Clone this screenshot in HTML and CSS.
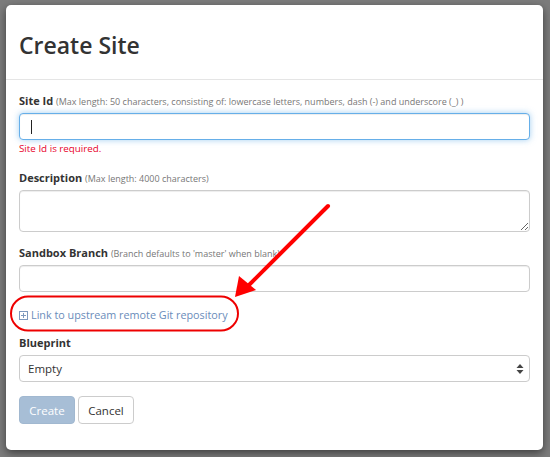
FILE: index.html
```html
<!DOCTYPE html>
<html>
<head>
<meta charset="utf-8">
<link rel="stylesheet" href="styles.css">
</head>
<body>
<div class="modal">
  <div class="modal-header">
    <h1 class="title">Create Site</h1>
  </div>
  <div class="modal-body">
    <div class="field">
      <label class="label">Site Id <span class="help">(Max length: 50 characters, consisting of: lowercase letters, numbers, dash (-) and underscore (_) )</span></label>
      <div class="input-wrap">
        <input class="control focused" type="text">
        <span class="caret"></span>
      </div>
      <div class="error">Site Id is required.</div>
    </div>
    <div class="field">
      <label class="label">Description <span class="help">(Max length: 4000 characters)</span></label>
      <textarea class="control area"></textarea>
    </div>
    <div class="field">
      <label class="label">Sandbox Branch <span class="help">(Branch defaults to 'master' when blank)</span></label>
      <input class="control" type="text">
    </div>
    <div class="link-row">
      <span class="plus"><svg width="9" height="9" viewBox="0 0 9 9"><rect x="0.5" y="0.5" width="8" height="8" fill="none" stroke="#7d98bd" stroke-width="1"/><path d="M2 4.5h5M4.5 2v5" stroke="#7d98bd" stroke-width="1"/></svg></span>
      <span class="link">Link to upstream remote Git repository</span>
    </div>
    <div class="field">
      <label class="label">Blueprint</label>
      <div class="select">
        <span>Empty</span>
        <svg class="updown" width="8" height="12" viewBox="0 0 8 12"><path d="M4 1L7.5 5H0.5z M4 11L7.5 7H0.5z" fill="#444"/></svg>
      </div>
    </div>
    <div class="buttons">
      <button class="btn btn-primary">Create</button>
      <button class="btn btn-default">Cancel</button>
    </div>
  </div>
</div>
<svg class="annot" width="550" height="457" viewBox="0 0 550 457">
  <rect x="11" y="296.5" width="227" height="34" rx="17" ry="17" fill="none" stroke="#ee0000" stroke-width="2"/>
  <path d="M328 206 L246 288" stroke="#ff0000" stroke-width="4" stroke-linecap="round"/>
  <path d="M235 297 L239 276 L256 290 Z" fill="#ff0000"/>
</svg>
</body>
</html>
```

FILE: styles.css
```css
* { box-sizing: border-box; }
html, body { margin: 0; padding: 0; }
body {
  width: 550px;
  height: 457px;
  background: #7c7c7c;
  font-family: "Open Sans", "Liberation Sans", sans-serif;
  color: #333;
  overflow: hidden;
  position: relative;
  padding-top: 5px;
  padding-left: 6px;
}
.modal {
  width: 537px;
  height: 445px;
  background: #fff;
  border-radius: 5px;
  box-shadow: 0 3px 9px rgba(0,0,0,0.5);
}
.modal-header {
  height: 75px;
  border-bottom: 1px solid #e5e5e5;
  padding: 25px 13px 0;
}
.title {
  margin: 0;
  font-size: 23px;
  line-height: 30px;
  font-weight: 600;
  color: #333;
}
.modal-body {
  padding: 13px 13px 0;
}
.field { display: flex; flex-direction: column; }
.label {
  display: block;
  font-size: 11px;
  font-weight: 700;
  line-height: 16px;
  height: 16px;
  margin-bottom: 4px;
  color: #333;
  white-space: nowrap;
}
.help {
  font-size: 9px;
  font-weight: 400;
  color: #777;
  line-height: 1;
}
.input-wrap { position: relative; }
.control {
  display: block;
  width: 100%;
  height: 27px;
  border: 1px solid #ccc;
  border-radius: 4px;
  background: #fff;
  box-shadow: inset 0 1px 1px rgba(0,0,0,0.075);
  font-family: inherit;
  font-size: 12px;
  padding: 4px 10px;
  margin: 0;
  outline: none;
}
.control.focused {
  border-color: #66afe9;
  box-shadow: inset 0 1px 1px rgba(0,0,0,0.075), 0 0 6px rgba(102,175,233,0.6);
}
.caret {
  position: absolute;
  left: 12px;
  top: 7px;
  width: 1px;
  height: 14px;
  background: #222;
}
.area {
  height: 42px;
  resize: vertical;
}
.error {
  color: #e8002b;
  font-size: 9.8px;
  line-height: 16px;
  height: 16px;
  margin-top: 1px;
  margin-bottom: 13px;
}
.field:nth-child(2) { margin-bottom: 13px; }
.link-row {
  display: flex;
  align-items: center;
  gap: 3px;
  margin-top: 14px;
  height: 18px;
  margin-bottom: 11px;
}
.plus { display: flex; width: 9px; height: 9px; }
.link {
  font-size: 10.8px;
  color: #6a8cba;
  line-height: 18px;
}
.select {
  display: flex;
  align-items: center;
  justify-content: space-between;
  height: 27px;
  border: 1px solid #ccc;
  border-radius: 4px;
  padding: 0 5px 0 8px;
  font-size: 11.5px;
  color: #333;
}
.updown { display: block; }
.buttons {
  display: flex;
  gap: 3px;
  margin-top: 14px;
}
.btn {
  height: 28px;
  border-radius: 4px;
  font-family: inherit;
  font-size: 11.5px;
  padding: 0;
  width: 56px;
  margin: 0;
}
.btn-primary {
  background: #a7bed6;
  border: 1px solid #a1b8d0;
  color: #fff;
}
.btn-default {
  background: #fff;
  border: 1px solid #ccc;
  color: #333;
}
.annot {
  position: absolute;
  left: 0;
  top: 0;
  pointer-events: none;
}
```
